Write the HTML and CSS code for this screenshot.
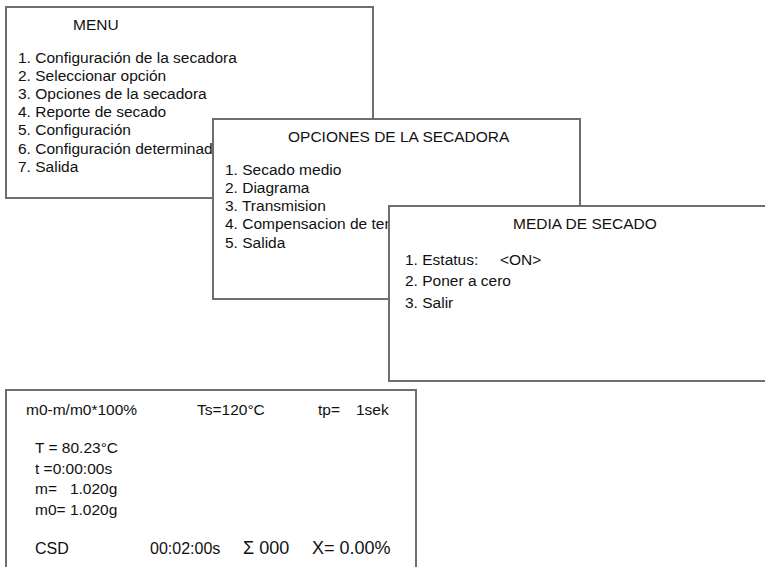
FILE: index.html
```html
<!DOCTYPE html>
<html lang="es">
<head>
  <meta charset="UTF-8">
  <meta name="viewport" content="width=device-width, initial-scale=1.0">
  <title>Menu secadora</title>
  <link rel="stylesheet" href="styles.css">
</head>
<body>
  <div class="screen">
    <div class="box menu">
      <div class="title">MENU</div>
      <ol class="items">
        <li>1. Configuración de la secadora</li>
        <li>2. Seleccionar opción</li>
        <li>3. Opciones de la secadora</li>
        <li>4. Reporte de secado</li>
        <li>5. Configuración</li>
        <li>6. Configuración determinada</li>
        <li>7. Salida</li>
      </ol>
    </div>

    <div class="box options">
      <div class="title">OPCIONES DE LA SECADORA</div>
      <ol class="items">
        <li>1. Secado medio</li>
        <li>2. Diagrama</li>
        <li>3. Transmision</li>
        <li>4. Compensacion de temperatura</li>
        <li>5. Salida</li>
      </ol>
    </div>

    <div class="box media">
      <div class="title">MEDIA DE SECADO</div>
      <ol class="items">
        <li><span class="label">1. Estatus:</span>&lt;ON&gt;</li>
        <li>2. Poner a cero</li>
        <li>3. Salir</li>
      </ol>
    </div>

    <div class="box display">
      <div class="head">
        <span>m0-m/m0*100%</span>
        <span>Ts=120°C</span>
        <span>tp=</span>
        <span>1sek</span>
      </div>
      <div class="values">
        <div>T = 80.23°C</div>
        <div>t =0:00:00s</div>
        <div>m=&nbsp;&nbsp; 1.020g</div>
        <div>m0= 1.020g</div>
      </div>
      <div class="foot">
        <span>CSD</span>
        <span>00:02:00s</span>
        <span class="big">Σ 000</span>
        <span class="big">X= 0.00%</span>
      </div>
    </div>
  </div>
</body>
</html>
```

FILE: styles.css
```css
/* Dryer display screens */
body {
  margin: 0;
  background: #fff;
  color: #111;
  font-family: "Liberation Sans", Arial, sans-serif;
  font-size: 15.5px;
  overflow: hidden;
}
.screen {
  position: relative;
  width: 765px;
  height: 567px;
  overflow: hidden;
}
.box {
  position: absolute;
  box-sizing: border-box;
  background: #fff;
  border: 2px solid #6e6e6e;
  line-height: 18.2px;
  white-space: nowrap;
  overflow: hidden;
}
.items {
  list-style: none;
  margin: 0;
  padding: 0;
}

.menu {
  left: 5px;
  top: 6px;
  width: 369px;
  height: 193px;
  padding: 7.5px 0 0 11px;
}
.menu .title {
  padding-left: 55px;
  margin-bottom: 14.8px;
}

.options {
  left: 212px;
  top: 118px;
  width: 369px;
  height: 182px;
  padding: 8px 0 0 11px;
}
.options .title {
  padding-left: 63px;
  margin-bottom: 14.5px;
}

.media {
  left: 388px;
  top: 205px;
  width: 400px;
  height: 177px;
  padding: 7.5px 0 0 15px;
}
.media .title {
  padding-left: 108px;
  margin-bottom: 16px;
}
.media .items {
  line-height: 21.5px;
}
.media .label {
  display: inline-block;
  width: 95px;
}

.display {
  left: 5px;
  top: 389px;
  width: 412px;
  height: 200px;
  padding: 9.5px 0 0 19px;
}
.head {
  display: grid;
  grid-template-columns: 171px 121px 38px auto;
}
.values {
  margin: 19.7px 0 0 9px;
  line-height: 20.5px;
}
.foot {
  display: grid;
  grid-template-columns: 115px 93px 69px auto;
  align-items: baseline;
  margin: 18px 0 0 9px;
  font-size: 16px;
  line-height: 20px;
}
.foot .big {
  font-size: 18px;
}
```
